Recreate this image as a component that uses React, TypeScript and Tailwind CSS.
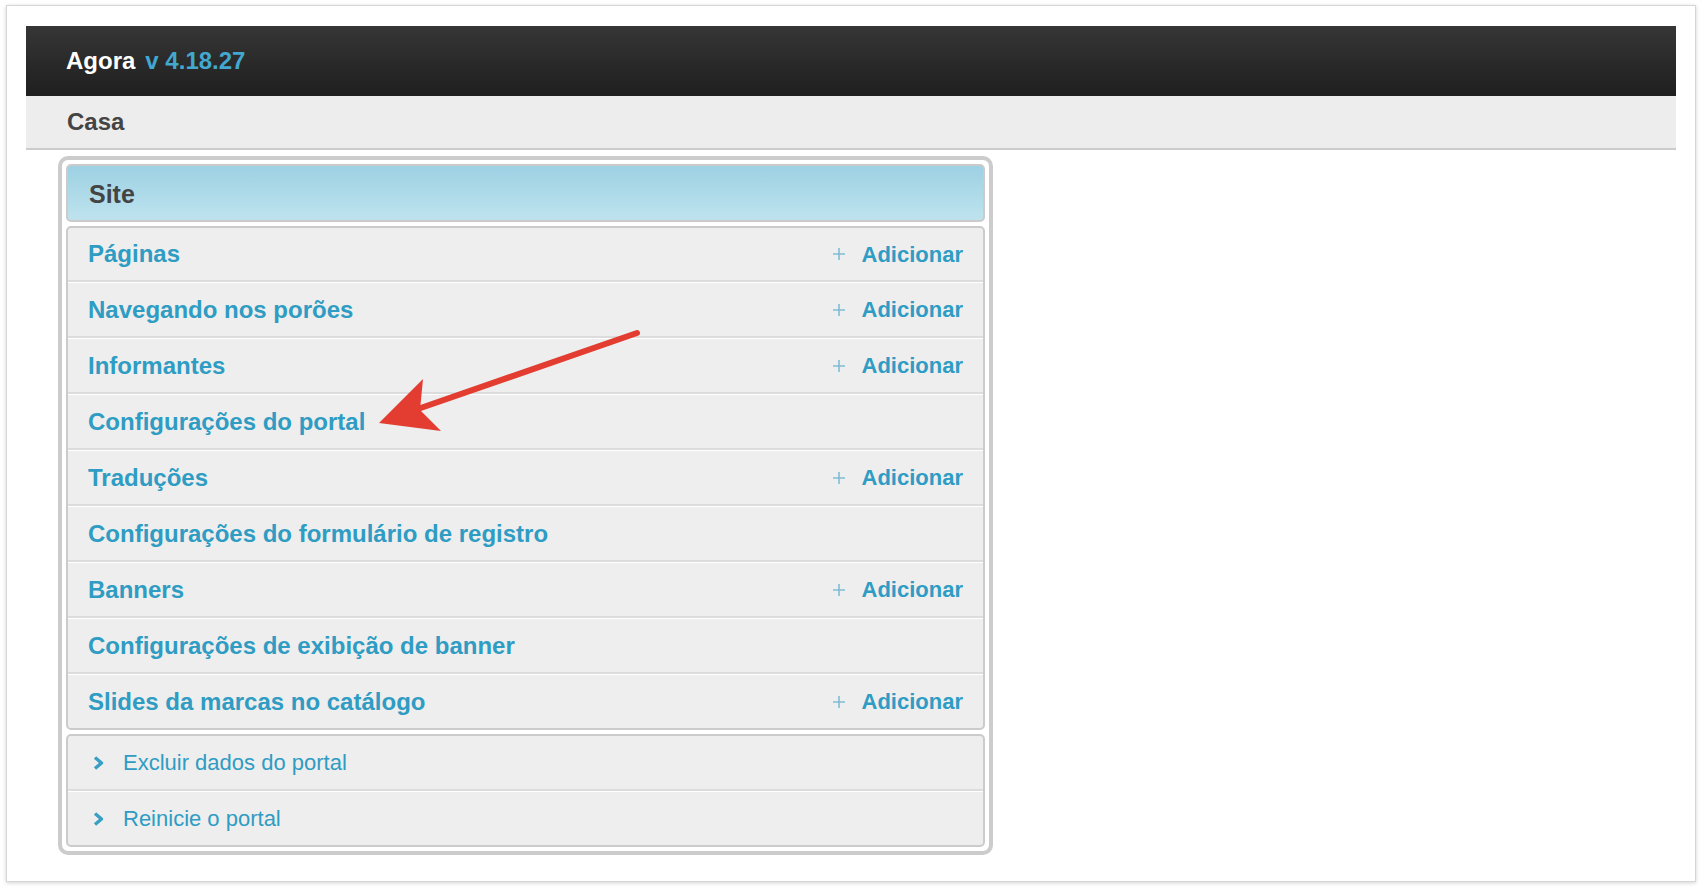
import React from "react";

const rows: { label: string; add: boolean }[] = [
  { label: "Páginas", add: true },
  { label: "Navegando nos porões", add: true },
  { label: "Informantes", add: true },
  { label: "Configurações do portal", add: false },
  { label: "Traduções", add: true },
  { label: "Configurações do formulário de registro", add: false },
  { label: "Banners", add: true },
  { label: "Configurações de exibição de banner", add: false },
  { label: "Slides da marcas no catálogo", add: true },
];

function Plus() {
  return (
    <svg width="14" height="14" viewBox="0 0 14 14" className="mr-[16px]">
      <path d="M7 1 V13 M1 7 H13" stroke="#7dbdd4" strokeWidth="1.6" fill="none" />
    </svg>
  );
}

function Chevron() {
  return (
    <svg width="13" height="16" viewBox="0 0 13 16" className="mr-[18px]">
      <path d="M3 2.5 L9.5 8 L3 13.5" stroke="#3a9fc4" strokeWidth="3.4" fill="none" strokeLinejoin="round" />
    </svg>
  );
}

export default function App() {
  return (
    <div className="relative w-[1702px] h-[888px] bg-white pt-[5px] px-[6px] pb-[6px] font-['Liberation_Sans',Arial,sans-serif]">
      <div className="h-full bg-white border border-[#d6d6d6] shadow-[0_1px_4px_rgba(0,0,0,0.18)] pt-[20px] px-[19px]">
        <div className="h-[70px] bg-gradient-to-b from-[#363636] to-[#1f1f1f] flex items-center pl-[40px] text-[24px] font-bold">
          <span className="text-white">Agora</span>
          <span className="ml-[10px] text-[#42a8d0]">v 4.18.27</span>
        </div>
        <div className="h-[54px] bg-[#ededed] border-b-2 border-[#cccccc] flex items-center pl-[41px] text-[24px] font-bold text-[#444444]">
          Casa
        </div>
        <div className="pl-[32px] pt-[6px]">
          <div className="w-[935px] border-4 border-[#cccccc] rounded-[10px] p-[4px] bg-white flex flex-col gap-[4px]">
            <div className="h-[58px] rounded-[5px] border-2 border-[#cbcbcb] bg-gradient-to-b from-[#9dd1e3] to-[#bee3ee] flex items-center pt-[4px] pl-[21px] text-[25px] font-bold text-[#444444]">
              Site
            </div>
            <div className="rounded-[5px] border-2 border-[#cbcbcb] bg-[#eeeeee] flex flex-col">
              {rows.map((r, i) => (
                <div
                  key={r.label}
                  className={
                    "flex items-center justify-between pl-[20px] pr-[20px] " +
                    (i === 0 ? "h-[54px] " : i === rows.length - 1 ? "h-[54px] border-t border-white " : "h-[56px] border-t border-white ") +
                    (i === rows.length - 1 ? "" : "border-b-2 border-b-[#dcdcdc]")
                  }
                >
                  <span className="text-[24px] font-bold text-[#2e9cc3]">{r.label}</span>
                  {r.add && (
                    <span className="flex items-center text-[22px] font-bold text-[#2e9cc3]">
                      <Plus />
                      Adicionar
                    </span>
                  )}
                </div>
              ))}
            </div>
            <div className="rounded-[5px] border-2 border-[#cbcbcb] bg-[#eeeeee] flex flex-col">
              <div className="h-[55px] flex items-center pl-[24px] border-b-2 border-b-[#dcdcdc] text-[22px] text-[#2e9cc3]">
                <Chevron />
                Excluir dados do portal
              </div>
              <div className="h-[54px] flex items-center pl-[24px] border-t border-white text-[22px] text-[#2e9cc3]">
                <Chevron />
                Reinicie o portal
              </div>
            </div>
          </div>
        </div>
      </div>
      <svg className="absolute inset-0 pointer-events-none" width="1702" height="888" viewBox="0 0 1702 888">
        <line x1="637" y1="333" x2="412" y2="411" stroke="#e23d30" strokeWidth="6" strokeLinecap="round" />
        <polygon points="379,423 423,379 420,410 441,431" fill="#e23d30" />
      </svg>
    </div>
  );
}
